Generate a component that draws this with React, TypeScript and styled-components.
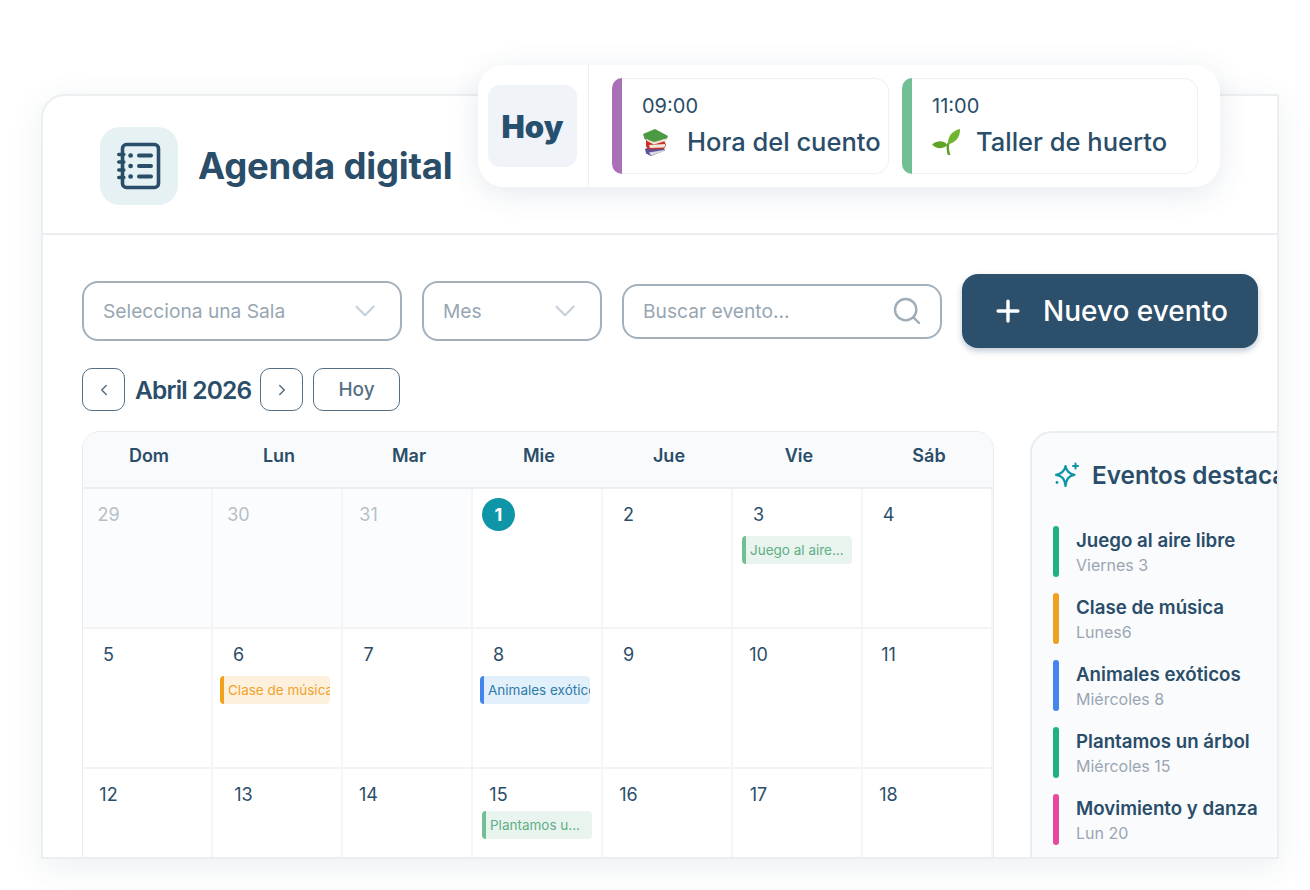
import styled, { createGlobalStyle } from "styled-components";
import { ChevronDown, ChevronLeft, ChevronRight, Plus, Search } from "lucide-react";

const navy = "#2a4d69";

const GlobalStyle = createGlobalStyle`
  html, body {
    margin: 0;
    padding: 0;
    background: #fff;
    font-family: "Inter", "Liberation Sans", sans-serif;
    color: ${navy};
  }
  * {
    box-sizing: border-box;
  }
`;

const Stage = styled.div`
  position: relative;
  width: 1310px;
  height: 890px;
  padding: 94px 31px 32px 41px;
  overflow: hidden;
`;

const Window = styled.main`
  width: 1238px;
  height: 765px;
  background: #fff;
  border: 2px solid #ebeff2;
  border-radius: 24px 0 0 0;
  box-shadow: 0 8px 34px rgba(42, 77, 105, 0.09);
  overflow: hidden;
`;

const Header = styled.header`
  height: 139px;
  display: flex;
  align-items: center;
  gap: 20px;
  padding: 2px 0 0 57px;
  border-bottom: 2px solid #e9edf0;
`;

const LogoBox = styled.div`
  width: 78px;
  height: 78px;
  border-radius: 20px;
  background: #e5f1f3;
  display: flex;
  align-items: center;
  justify-content: center;
`;

const Title = styled.h1`
  margin: 0;
  font-size: 36.5px;
  font-weight: 700;
  letter-spacing: -0.2px;
  color: ${navy};
`;

const Content = styled.div`
  padding: 39px 0 0 39px;
`;

const Toolbar = styled.div`
  display: flex;
  align-items: center;
  gap: 20px;
  height: 74px;
`;

const Select = styled.div<{ $w: number }>`
  width: ${(p) => p.$w}px;
  height: 60px;
  border: 2px solid #a3b1bd;
  border-radius: 16px;
  padding: 0 18px 0 19px;
  display: flex;
  align-items: center;
  justify-content: space-between;
  font-size: 19.2px;
  color: #97a6b2;
  svg {
    color: #c6d0d8;
  }
`;

const SearchBox = styled(Select)`
  height: 55px;
  padding-right: 17px;
  border-radius: 16px;
  svg {
    color: #9fadb8;
  }
`;

const NewButton = styled.button`
  width: 296px;
  height: 74px;
  border: none;
  border-radius: 16px;
  background: #2c506b;
  color: #fff;
  font: inherit;
  font-size: 28px;
  font-weight: 500;
  display: flex;
  align-items: center;
  gap: 18px;
  padding: 0 0 0 29px;
  box-shadow: 0 3px 6px rgba(42, 77, 105, 0.3);
`;

const MonthNav = styled.div`
  display: flex;
  align-items: center;
  margin-top: 20px;
  height: 43px;
`;

const NavButton = styled.button`
  width: 43px;
  height: 43px;
  padding: 0;
  background: #fff;
  border: 1.5px solid #566f83;
  border-radius: 10px;
  color: #566f83;
  display: flex;
  align-items: center;
  justify-content: center;
`;

const TodayButton = styled(NavButton)`
  width: 87px;
  margin-left: 10px;
  font: inherit;
  font-size: 19px;
  font-weight: 500;
`;

const MonthLabel = styled.span`
  width: 135px;
  padding-left: 10px;
  font-size: 24.5px;
  font-weight: 600;
  letter-spacing: -0.8px;
  white-space: nowrap;
`;

const Columns = styled.div`
  display: flex;
  gap: 36px;
  margin-top: 20px;
  align-items: flex-start;
`;

const Calendar = styled.section`
  width: 912px;
  flex: none;
  border: 1px solid #e8ecef;
  border-radius: 18px 18px 0 0;
`;

const WeekHeader = styled.div`
  display: grid;
  grid-template-columns: repeat(7, 130px);
  height: 57px;
  padding-left: 1px;
  background: #f8fafb;
  border-bottom: 2px solid #eceff2;
  border-radius: 17px 17px 0 0;
`;

const WeekDay = styled.div`
  display: flex;
  justify-content: center;
  padding-top: 13px;
  font-size: 18px;
  font-weight: 600;
`;

const Grid = styled.div`
  display: grid;
  grid-template-columns: repeat(7, 130px);
  grid-auto-rows: 140px;
`;

const Cell = styled.div<{ $muted?: boolean }>`
  border-right: 2px solid #f3f5f7;
  border-bottom: 2px solid #f1f3f5;
  background: ${(p) => (p.$muted ? "#fbfcfd" : "#fff")};
  padding: 9px 0 0 7px;
`;

const DayNum = styled.div<{ $muted?: boolean; $today?: boolean; $shift?: number }>`
  width: 33px;
  height: 33px;
  margin-left: ${(p) => 2 + (p.$shift ?? 0)}px;
  border-radius: 50%;
  display: flex;
  align-items: center;
  justify-content: center;
  font-size: 18px;
  font-weight: ${(p) => (p.$today ? 700 : 400)};
  color: ${(p) => (p.$today ? "#fff" : p.$muted ? "#b7bfc8" : navy)};
  background: ${(p) => (p.$today ? "#0e96a8" : "transparent")};
`;

const palette = {
  green: { bar: "#72bf95", bg: "#e9f4ef", fg: "#5fae85" },
  orange: { bar: "#f3a01d", bg: "#fdf1de", fg: "#f0a12a" },
  blue: { bar: "#4285ec", bg: "#e2f0fb", fg: "#2f7ba8" },
};

type Tone = keyof typeof palette;

const Chip = styled.div<{ $tone: Tone; $indent: number; $top: number }>`
  width: 110px;
  height: 28px;
  margin: ${(p) => p.$top}px 0 0 ${(p) => p.$indent}px;
  border-left: 4px solid ${(p) => palette[p.$tone].bar};
  border-radius: 4px;
  background: ${(p) => palette[p.$tone].bg};
  color: ${(p) => palette[p.$tone].fg};
  font-size: 13.5px;
  line-height: 28px;
  padding-left: 4px;
  white-space: nowrap;
  overflow: hidden;
`;

const Sidebar = styled.aside`
  width: 260px;
  height: 430px;
  flex: none;
  background: #f9fbfd;
  border: 2px solid #e6eef0;
  border-radius: 22px 0 0 0;
  padding: 26px 0 0 21px;
`;

const SideTitle = styled.h2`
  margin: 0 0 35px;
  display: flex;
  align-items: center;
  gap: 12px;
  height: 32px;
  font-size: 24.3px;
  font-weight: 600;
  white-space: nowrap;
  svg {
    flex: none;
  }
`;

const SideList = styled.div`
  display: flex;
  flex-direction: column;
  gap: 16px;
`;

const SideItem = styled.div`
  display: flex;
  gap: 17px;
  height: 51px;
`;

const SideBar = styled.span<{ $color: string }>`
  width: 6px;
  border-radius: 3px;
  background: ${(p) => p.$color};
`;

const SideText = styled.div`
  padding-top: 2px;
`;

const SideName = styled.div`
  font-size: 18.7px;
  font-weight: 600;
  line-height: 25px;
  white-space: nowrap;
`;

const SideDate = styled.div`
  font-size: 16px;
  line-height: 24px;
  color: #9ba6b2;
`;

const TodayPanel = styled.div`
  position: absolute;
  left: 478px;
  top: 65px;
  width: 742px;
  height: 122px;
  display: flex;
  background: #fff;
  border-radius: 26px;
  box-shadow: 0 6px 30px rgba(42, 77, 105, 0.12);
`;

const TodaySide = styled.div`
  width: 111px;
  flex: none;
  border-right: 1px solid #edf0f2;
  padding: 20px 0 0 10px;
`;

const TodayBadge = styled.div`
  width: 89px;
  height: 82px;
  border-radius: 12px;
  background: #f0f4f8;
  display: flex;
  align-items: center;
  justify-content: center;
  font-size: 31px;
  font-weight: 900;
  color: #27506f;
`;

const TodayCards = styled.div`
  display: flex;
  gap: 13px;
  padding: 13px 0 0 23px;
`;

const TodayCard = styled.div<{ $w: number }>`
  width: ${(p) => p.$w}px;
  height: 96px;
  display: flex;
`;

const CardBar = styled.span<{ $color: string }>`
  width: 10px;
  flex: none;
  background: ${(p) => p.$color};
  border-radius: 12px 0 0 12px;
`;

const CardBody = styled.div`
  flex: 1;
  border: 1.5px solid #eef1f3;
  border-left: none;
  border-radius: 0 14px 14px 0;
  padding: 14px 0 0 20px;
`;

const CardTime = styled.div`
  font-size: 20px;
  line-height: 26px;
`;

const CardName = styled.div`
  display: flex;
  align-items: center;
  gap: 16px;
  margin-top: 5px;
  font-size: 25.5px;
  line-height: 36px;
  font-weight: 500;
  white-space: nowrap;
`;

const NotebookIcon = () => (
  <svg width="44" height="48" viewBox="0 0 44 48" fill="none" stroke={navy} strokeWidth="3.6" strokeLinecap="round">
    <rect x="5.5" y="2.5" width="36" height="43" rx="4" />
    <path d="M1.8 12.5h5M1.8 20h5M1.8 28h5M1.8 35.5h5" />
    <path d="M22 13.5h12M22 24h12M22 34.5h12" strokeWidth="4" />
    <path d="M13.5 13.5h.2M13.5 24h.2M13.5 34.5h.2" strokeWidth="4.6" />
  </svg>
);

const SparkleIcon = () => (
  <svg width="27" height="27" viewBox="0 0 27 27" fill="none" stroke="#0e96a8" strokeWidth="2.2" strokeLinejoin="round" strokeLinecap="round">
    <path d="M12.5 4c.9 5.200 3.400 7.700 9 8.800-5.600 1.100-8.100 3.600-9 11.200-.9-7.600-3.400-10.100-9.500-11.200 6.100-1.100 8.600-3.600 9.500-8.800Z" />
    <path d="M22.500 1.500v5M20 4h5" strokeWidth="2" />
    <circle cx="4" cy="20.500" r="1.400" fill="#0e96a8" stroke="none" />
  </svg>
);

const BooksIcon = () => (
  <svg width="29" height="27" viewBox="-1 0 29 27">
    <path d="M2 20l4-2 14-.500 2 4-14 5.500-5-2.500z" fill="#5c5499" />
    <path d="M6 23.500l15-2.500.500 1-13.500 4.500z" fill="#dcdce6" />
    <path d="M3 11h18l2 5-2 4-15 .500-3-3z" fill="#c8322b" />
    <path d="M6 16l16-1v2L21 18.500 7 19z" fill="#efe7da" />
    <path d="M0 5L12 0l13 7-1 2.500L11 13 3 10z" fill="#4c9a42" />
    <path d="M3 10l8 3 13-3.500v2L11 15.500 4 12z" fill="#e8e8da" />
    <path d="M0 5l3 5 1 2-2.500-2.500z" fill="#2f7a32" />
  </svg>
);

const SeedlingIcon = () => (
  <svg width="28" height="26" viewBox="0 0 28 26">
    <path d="M17 25.500c-1.300-3.500-1.500-7-.8-10.500" fill="none" stroke="#5d9e2b" strokeWidth="2.400" strokeLinecap="round" />
    <path d="M16 15.500C15.500 7.500 20 2 28 0c.3 8-4 13.500-12 15.500Z" fill="#6eb52f" />
    <path d="M15.500 16c-3-4.500-9.500-5.500-15.500-.5 4 4.500 11 5 15.500.5Z" fill="#5ea526" />
  </svg>
);

const weekDays = ["Dom", "Lun", "Mar", "Mie", "Jue", "Vie", "Sáb"];

type Day = {
  n: number;
  muted?: boolean;
  today?: boolean;
  shift?: number;
  chip?: { text: string; tone: Tone; indent: number; top: number };
};

const days: Day[] = [
  { n: 29, muted: true },
  { n: 30, muted: true },
  { n: 31, muted: true },
  { n: 1, today: true },
  { n: 2 },
  { n: 3, chip: { text: "Juego al aire...", tone: "green", indent: 2, top: 5 } },
  { n: 4 },
  { n: 5 },
  { n: 6, chip: { text: "Clase de música", tone: "orange", indent: 0, top: 5 } },
  { n: 7 },
  { n: 8, chip: { text: "Animales exóticos", tone: "blue", indent: 0, top: 5 } },
  { n: 9 },
  { n: 10 },
  { n: 11 },
  { n: 12 },
  { n: 13, shift: 5 },
  { n: 14 },
  { n: 15, chip: { text: "Plantamos u...", tone: "green", indent: 2, top: 0 } },
  { n: 16 },
  { n: 17 },
  { n: 18 },
];

const featured = [
  { name: "Juego al aire libre", date: "Viernes 3", color: "#1fb184" },
  { name: "Clase de música", date: "Lunes6", color: "#f0a01c" },
  { name: "Animales exóticos", date: "Miércoles 8", color: "#4285ec" },
  { name: "Plantamos un árbol", date: "Miércoles 15", color: "#1fb184" },
  { name: "Movimiento y danza", date: "Lun 20", color: "#e6489b" },
];

export default function App() {
  return (
    <Stage>
      <GlobalStyle />
      <Window>
        <Header>
          <LogoBox>
            <NotebookIcon />
          </LogoBox>
          <Title>Agenda digital</Title>
        </Header>
        <Content>
          <Toolbar>
            <Select $w={320}>
              Selecciona una Sala
              <ChevronDown size={34} strokeWidth={1.5} />
            </Select>
            <Select $w={180}>
              Mes
              <ChevronDown size={34} strokeWidth={1.5} />
            </Select>
            <SearchBox $w={320}>
              Buscar evento...
              <Search size={32} strokeWidth={1.8} />
            </SearchBox>
            <NewButton>
              <Plus size={34} strokeWidth={2.4} />
              Nuevo evento
            </NewButton>
          </Toolbar>
          <MonthNav>
            <NavButton>
              <ChevronLeft size={18} />
            </NavButton>
            <MonthLabel>Abril 2026</MonthLabel>
            <NavButton>
              <ChevronRight size={18} />
            </NavButton>
            <TodayButton>Hoy</TodayButton>
          </MonthNav>
          <Columns>
            <Calendar>
              <WeekHeader>
                {weekDays.map((d) => (
                  <WeekDay key={d}>{d}</WeekDay>
                ))}
              </WeekHeader>
              <Grid>
                {days.map((d) => (
                  <Cell key={d.n} $muted={d.muted}>
                    <DayNum $muted={d.muted} $today={d.today} $shift={d.shift}>
                      {d.n}
                    </DayNum>
                    {d.chip && (
                      <Chip $tone={d.chip.tone} $indent={d.chip.indent} $top={d.chip.top}>
                        {d.chip.text}
                      </Chip>
                    )}
                  </Cell>
                ))}
              </Grid>
            </Calendar>
            <Sidebar>
              <SideTitle>
                <SparkleIcon />
                Eventos destacados
              </SideTitle>
              <SideList>
                {featured.map((f) => (
                  <SideItem key={f.name}>
                    <SideBar $color={f.color} />
                    <SideText>
                      <SideName>{f.name}</SideName>
                      <SideDate>{f.date}</SideDate>
                    </SideText>
                  </SideItem>
                ))}
              </SideList>
            </Sidebar>
          </Columns>
        </Content>
      </Window>
      <TodayPanel>
        <TodaySide>
          <TodayBadge>Hoy</TodayBadge>
        </TodaySide>
        <TodayCards>
          <TodayCard $w={277}>
            <CardBar $color="#a970b8" />
            <CardBody>
              <CardTime>09:00</CardTime>
              <CardName>
                <BooksIcon />
                Hora del cuento
              </CardName>
            </CardBody>
          </TodayCard>
          <TodayCard $w={296}>
            <CardBar $color="#72bf95" />
            <CardBody>
              <CardTime>11:00</CardTime>
              <CardName>
                <SeedlingIcon />
                Taller de huerto
              </CardName>
            </CardBody>
          </TodayCard>
        </TodayCards>
      </TodayPanel>
    </Stage>
  );
}
